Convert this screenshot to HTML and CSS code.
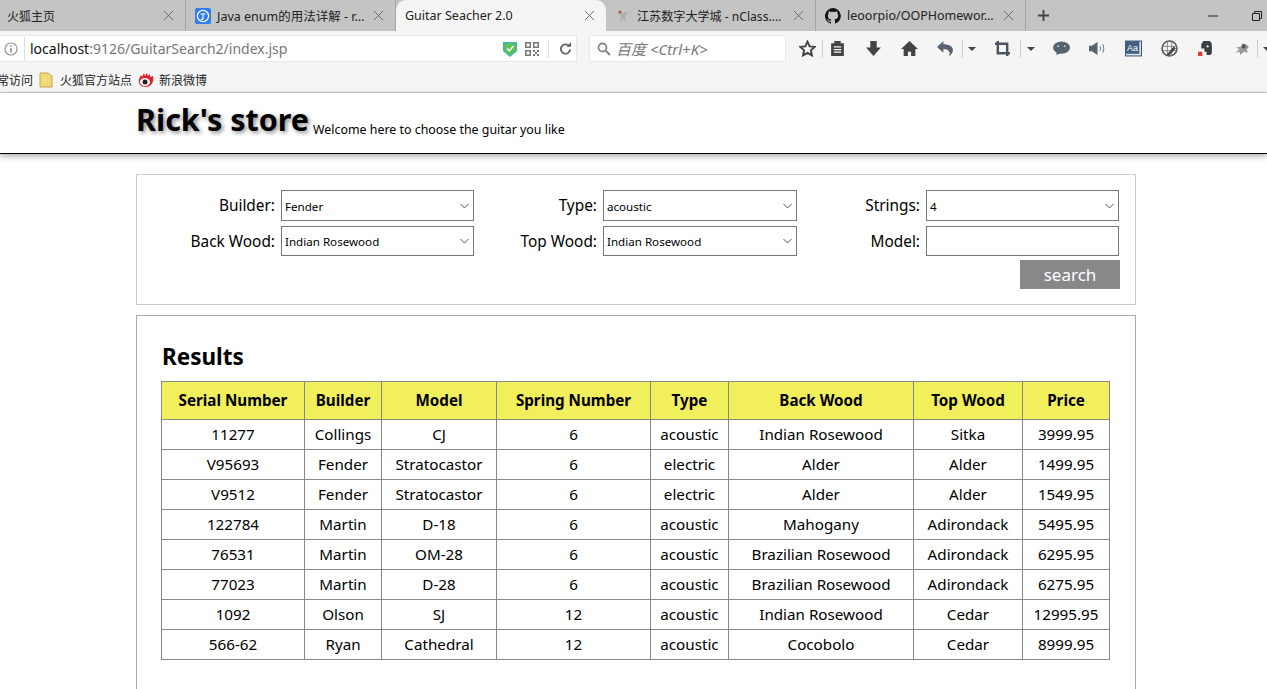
FILE: index.html
```html
<!DOCTYPE html>
<html lang="en">
<head>
	<meta charset="UTF-8">
	<title>Guitar Seacher 2.0</title>
	<link rel="stylesheet" href="styles.css">
</head>
<body>
	<div class="browser">
		<div class="tabs">
			<div class="tab tab-first">
				<span class="tab-title">火狐主页</span>
				<svg class="close" viewBox="0 0 12 12"><path d="M1 1l10 10M11 1L1 11"/></svg>
			</div>
			<div class="tab">
				<svg class="favicon" viewBox="0 0 16 16"><rect width="16" height="16" rx="2" fill="#2f7df0"/><circle cx="8" cy="8" r="5.6" fill="none" stroke="#fff" stroke-width="1.3"/><path d="M5.5 6h5M8 6v4.500c0 1-1 1.200-2 .6" fill="none" stroke="#fff" stroke-width="1.200"/></svg>
				<span class="tab-title">Java enum的用法详解 - r...</span>
				<svg class="close" viewBox="0 0 12 12"><path d="M1 1l10 10M11 1L1 11"/></svg>
			</div>
			<div class="tab tab-active">
				<span class="tab-title">Guitar Seacher 2.0</span>
				<svg class="close" viewBox="0 0 12 12"><path d="M1 1l10 10M11 1L1 11"/></svg>
			</div>
			<div class="tab">
				<svg class="favicon" viewBox="0 0 16 16"><path d="M3 3l5 2 5-2-3 5 1 6-3-3-3 3 1-6z" fill="#b5aca8"/><circle cx="5" cy="4" r="1.500" fill="#a0574d"/></svg>
				<span class="tab-title tab-title-cjk">江苏数字大学城 - nClass....</span>
				<svg class="close" viewBox="0 0 12 12"><path d="M1 1l10 10M11 1L1 11"/></svg>
			</div>
			<div class="tab">
				<svg class="favicon" viewBox="0 0 16 16"><path d="M8 0a8 8 0 0 0-2.500 15.600c.4.100.5-.2.500-.4v-1.400c-2.200.5-2.700-1-2.700-1-.4-.9-.9-1.200-.9-1.200-.7-.5.100-.5.100-.5.800.1 1.200.8 1.200.8.700 1.200 1.900.9 2.300.7.100-.5.300-.9.500-1.100-1.800-.2-3.600-.9-3.600-4 0-.9.300-1.600.8-2.100-.1-.2-.4-1 .1-2.100 0 0 .7-.2 2.200.8a7.600 7.600 0 0 1 4 0c1.500-1 2.200-.8 2.200-.8.400 1.100.2 1.900.1 2.100.5.600.8 1.300.8 2.100 0 3.100-1.900 3.700-3.700 3.900.3.300.6.800.6 1.500v2.200c0 .2.100.5.600.4A8 8 0 0 0 8 0z" fill="#161514"/></svg>
				<span class="tab-title">leoorpio/OOPHomewor...</span>
				<svg class="close" viewBox="0 0 12 12"><path d="M1 1l10 10M11 1L1 11"/></svg>
			</div>
			<svg class="newtab" viewBox="0 0 14 14"><path d="M7 1v12M1 7h12"/></svg>
			<div class="winbtns">
				<svg class="winbtn" viewBox="0 0 10 10"><path d="M0 5h10"/></svg>
				<svg class="winbtn" viewBox="0 0 10 10"><path d="M.5 2.500h7v7h-7zM2.500 2.500v-2h7v7h-2"/></svg>
			</div>
		</div>

		<div class="toolbar">
			<div class="urlbar">
				<svg class="info" viewBox="0 0 14 14"><circle cx="7" cy="7" r="6" fill="none" stroke="#999" stroke-width="1.200"/><path d="M7 6v4.500M7 3.300v1.500" stroke="#888" stroke-width="1.500"/></svg>
				<span class="url"><b>localhost</b>:9126/GuitarSearch2/index.jsp</span>
				<svg class="shield" viewBox="0 0 14 16"><path d="M0 1h14v9l-7 6-7-6z" fill="#3fb5b0"/><path d="M1.500 2.500h11v7L7 14.200 1.500 9.500z" fill="#5cc24d"/><path d="M4 7.500l2.300 2.300L10.500 5" fill="none" stroke="#fff" stroke-width="1.600"/></svg>
				<svg class="qr" viewBox="0 0 14 14"><path d="M0 0h6v6H0zM1.500 1.500v3h3v-3zM8 0h6v6H8zM9.500 1.500v3h3v-3zM0 8h6v6H0zM1.500 9.500v3h3v-3zM8 8h2v2H8zM12 8h2v2h-2zM10 10h2v2h-2zM8 12h2v2H8zM12 12h2v2h-2z" fill="#777" fill-rule="evenodd"/></svg>
				<i class="url-sep"></i>
				<svg class="reload" viewBox="0 0 14 14"><path d="M11 4.500A5 5 0 1 0 12 8" fill="none" stroke="#666" stroke-width="2"/><path d="M8 5h5V0z" fill="#666"/></svg>
			</div>
			<div class="searchbar">
				<svg class="lens" viewBox="0 0 14 14"><circle cx="5.500" cy="5.500" r="4" fill="none" stroke="#888" stroke-width="1.800"/><path d="M8.500 8.500l4.500 4.500" stroke="#888" stroke-width="2.200"/></svg>
				<span class="search-hint">百度 &lt;Ctrl+K&gt;</span>
			</div>
			<div class="tools">
				<svg class="tool tool-star" viewBox="0 0 16 16"><path d="M8 1.500l2 4.500 4.800.5-3.600 3.200 1 4.800L8 12.100l-4.200 2.400 1-4.800L1.200 6.500 6 6z" fill="none" stroke="#444" stroke-width="1.800"/></svg>
				<i class="tool-sep sep-a"></i>
				<svg class="tool tool-clip" viewBox="0 0 16 16"><path d="M2 3h3V1h6v2h3v12H2z" fill="#444"/><path d="M4.500 6.500h7M4.500 9h7M4.500 11.500h7" stroke="#f5f5f5" stroke-width="1.200"/></svg>
				<svg class="tool tool-down" viewBox="0 0 16 16"><path d="M5 1h6v6h4l-7 8-7-8h4z" fill="#444"/></svg>
				<svg class="tool tool-home" viewBox="0 0 16 16"><path d="M8 1L0 8.500h2.500V15h4v-4h3v4h4V8.500H16z" fill="#444"/></svg>
				<svg class="tool tool-undo" viewBox="0 0 16 16"><path d="M6 1L0 6.500 6 12V8.500c3 0 5 1 6 3.500 0 1-.500 2-1 3 3-1 4-3.500 4-5.500 0-3.500-4-5.500-9-5.500z" fill="#5a6470"/></svg>
				<i class="tool-sep sep-b"></i>
				<svg class="tool-caret caret-a" viewBox="0 0 8 4"><path d="M0 0h8L4 4z"/></svg>
				<svg class="tool tool-crop" viewBox="0 0 16 16"><path d="M3 0v13h13M0 3h13v13" fill="none" stroke="#4a5560" stroke-width="2.600"/></svg>
				<i class="tool-sep sep-c"></i>
				<svg class="tool-caret caret-b" viewBox="0 0 8 4"><path d="M0 0h8L4 4z"/></svg>
				<svg class="tool tool-chat" viewBox="0 0 18 16"><ellipse cx="9" cy="7" rx="9" ry="6.500" fill="#566470"/><path d="M4 11l-.5 4L8 13z" fill="#566470"/><circle cx="5.500" cy="5.500" r="1" fill="#ccd"/><circle cx="12.500" cy="5.500" r="1" fill="#ccd"/></svg>
				<svg class="tool tool-sound" viewBox="0 0 18 16"><path d="M0 5h3l6-4v14l-6-4H0z" fill="#566470"/><path d="M11.500 5.500c1 1.500 1 3.500 0 5M14.500 3.500c1.500 3 1.500 6 0 9" fill="none" stroke="#566470"/></svg>
				<svg class="tool tool-dict" viewBox="0 0 16 16"><rect x=".5" y="1" width="15" height="14" fill="#dfe6ee" stroke="#3f5b7c"/><rect x=".5" y="1" width="13" height="12" fill="#41607f"/><text x="7" y="10.500" class="dict-text">Aa</text></svg>
				<svg class="tool tool-globe" viewBox="0 0 16 16"><circle cx="8" cy="8" r="7" fill="none" stroke="#555" stroke-width="1.500"/><path d="M1 6h14M1 10h14M6 1v14M10 1v14" stroke="#777" stroke-width=".8"/><path d="M6 13l6-7 2 2-6 6-3 1z" fill="#444"/></svg>
				<svg class="tool tool-note" viewBox="0 0 16 16"><path d="M6 1h5c2 0 3 2 3 4v6c0 2-1 3-2 3H9v-3H7V8H4V4z" fill="#3a3f44"/><circle cx="10" cy="6" r="1" fill="#f5f5f5"/><rect x="1" y="11" width="4" height="4" fill="#e0392b"/></svg>
				<svg class="tool tool-bug" viewBox="0 0 16 16"><path d="M2 12l4-3-3-2 5-1 1-3 3 1 3 2-2 3 1 3-4-1-3 3-1-3z" fill="#9a9a9a"/><circle cx="10" cy="6" r="2" fill="#555"/></svg>
				<i class="tool-sep sep-d"></i>
				<svg class="tool-caret caret-c" viewBox="0 0 8 4"><path d="M0 0h8L4 4z"/></svg>
			</div>
		</div>

		<div class="bookmarks">
			<span class="bm bm-first">常访问</span>
			<svg class="bm-icon" viewBox="0 0 14 16"><path d="M1 1h8l4 3v11H1z" fill="#f3d878" stroke="#c2a24e"/></svg>
			<span class="bm">火狐官方站点</span>
			<svg class="bm-icon weibo" viewBox="0 0 16 16"><path d="M1 7l2-4 1 2 2-4 1 3 2-3 1 3 2-2v3l3-1c1 4 0 10-7 11C3 15 0 12 1 7z" fill="#e0202a"/><ellipse cx="7" cy="10" rx="5" ry="4" fill="#fff"/><circle cx="7" cy="10" r="2.500" fill="#222"/></svg>
			<span class="bm">新浪微博</span>
		</div>
	</div>

	<header class="site-head">
		<h1>Rick's store</h1>
		<span class="slogan">Welcome here to choose the guitar you like</span>
	</header>

	<form class="panel search-panel">
		<div class="search-grid">
			<label>Builder:</label>
			<select><option>Fender</option></select>
			<label>Type:</label>
			<select><option>acoustic</option></select>
			<label>Strings:</label>
			<select><option>4</option></select>
			<label>Back Wood:</label>
			<select><option>Indian Rosewood</option></select>
			<label>Top Wood:</label>
			<select><option>Indian Rosewood</option></select>
			<label>Model:</label>
			<input type="text">
		</div>
		<div class="search-row">
			<button type="button">search</button>
		</div>
	</form>

	<section class="panel results-panel">
		<h2>Results</h2>
		<table>
			<colgroup>
				<col class="c-serial"><col class="c-builder"><col class="c-model"><col class="c-spring">
				<col class="c-type"><col class="c-back"><col class="c-top"><col class="c-price">
			</colgroup>
			<thead>
				<tr><th>Serial Number</th><th>Builder</th><th>Model</th><th>Spring Number</th><th>Type</th><th>Back Wood</th><th>Top Wood</th><th>Price</th></tr>
			</thead>
			<tbody>
				<tr><td>11277</td><td>Collings</td><td>CJ</td><td>6</td><td>acoustic</td><td>Indian Rosewood</td><td>Sitka</td><td>3999.95</td></tr>
				<tr><td>V95693</td><td>Fender</td><td>Stratocastor</td><td>6</td><td>electric</td><td>Alder</td><td>Alder</td><td>1499.95</td></tr>
				<tr><td>V9512</td><td>Fender</td><td>Stratocastor</td><td>6</td><td>electric</td><td>Alder</td><td>Alder</td><td>1549.95</td></tr>
				<tr><td>122784</td><td>Martin</td><td>D-18</td><td>6</td><td>acoustic</td><td>Mahogany</td><td>Adirondack</td><td>5495.95</td></tr>
				<tr><td>76531</td><td>Martin</td><td>OM-28</td><td>6</td><td>acoustic</td><td>Brazilian Rosewood</td><td>Adirondack</td><td>6295.95</td></tr>
				<tr><td>77023</td><td>Martin</td><td>D-28</td><td>6</td><td>acoustic</td><td>Brazilian Rosewood</td><td>Adirondack</td><td>6275.95</td></tr>
				<tr><td>1092</td><td>Olson</td><td>SJ</td><td>12</td><td>acoustic</td><td>Indian Rosewood</td><td>Cedar</td><td>12995.95</td></tr>
				<tr><td>566-62</td><td>Ryan</td><td>Cathedral</td><td>12</td><td>acoustic</td><td>Cocobolo</td><td>Cedar</td><td>8999.95</td></tr>
			</tbody>
		</table>
	</section>
</body>
</html>
```

FILE: styles.css
```css
html, body {
	height: 689px;
	overflow: hidden;
}

body {
	margin: 0;
	background: #fff;
	color: #000;
	font-family: "Noto Sans", "Noto Sans CJK SC", sans-serif;
}

/* browser frame */
.browser {
	border-bottom: 1px solid #ccc;
}

.tabs {
	height: 31px;
	background: #c4c4c4;
	display: flex;
	align-items: center;
}

.tab {
	width: 210px;
	height: 31px;
	box-sizing: border-box;
	padding: 0 11px 0 9px;
	display: flex;
	align-items: center;
	border-right: 1px solid #a4a4a4;
	font-size: 12.500px;
	color: #222;
	white-space: nowrap;
}

.tab-first {
	width: 186px;
	padding-left: 7px;
	font-size: 12px;
}

.tab-title-cjk {
	font-size: 12.100px;
}

.tab-active {
	background: #f5f5f5;
	border-right: 0;
	border-radius: 10px 10px 0 0;
}

.favicon {
	width: 16px;
	height: 16px;
	margin-right: 6px;
	flex: none;
}

.close {
	width: 11px;
	height: 11px;
	margin-left: auto;
	flex: none;
	fill: none;
	stroke: #666;
	stroke-width: 1;
}

.newtab {
	width: 13px;
	height: 13px;
	margin-left: 11px;
	fill: none;
	stroke: #444;
	stroke-width: 2;
}

.winbtns {
	margin-left: auto;
	display: flex;
	gap: 34px;
	padding-right: 5px;
}

.winbtn {
	width: 10px;
	height: 10px;
	fill: none;
	stroke: #222;
}

.toolbar {
	height: 31px;
	background: #f5f5f5;
	display: flex;
	align-items: flex-start;
	padding-top: 4px;
	box-sizing: border-box;
}

.urlbar {
	width: 577px;
	height: 27px;
	box-sizing: border-box;
	background: #fff;
	border: 1px solid #e8e8e8;
	border-left: 0;
	display: flex;
	align-items: center;
	font-size: 14px;
}

.info {
	width: 14px;
	height: 14px;
	margin: 0 6px 0 4px;
	flex: none;
}

.url {
	color: #777;
	border-left: 1px solid #ddd;
	padding-left: 5px;
	line-height: 24px;
	width: 479px;
	box-sizing: border-box;
	flex: none;
}

.url b {
	font-weight: normal;
	color: #111;
}

.shield {
	width: 14px;
	height: 16px;
	flex: none;
}

.qr {
	width: 14px;
	height: 14px;
	margin-left: 8px;
	flex: none;
}

.url-sep {
	width: 1px;
	height: 18px;
	margin-left: 9px;
	background: #ddd;
	flex: none;
}

.reload {
	width: 13px;
	height: 13px;
	margin-left: 10px;
	flex: none;
}

.searchbar {
	width: 197px;
	height: 27px;
	margin-left: 12px;
	box-sizing: border-box;
	background: #fff;
	border: 1px solid #e8e8e8;
	display: flex;
	align-items: center;
	padding-left: 7px;
	font-size: 15px;
	font-style: italic;
	color: #777;
}

.lens {
	width: 14px;
	height: 14px;
	margin-right: 5px;
}

.tools {
	position: relative;
	flex: 1;
	height: 27px;
}

/* toolbar add-on icons sit at fixed spots along the strip */
.tool {
	position: absolute;
	top: 5px;
	width: 17px;
	height: 17px;
}

.tool-star { left: 13px; }
.tool-clip { left: 43px; }
.tool-down { left: 79px; }
.tool-home { left: 115px; }
.tool-undo { left: 151px; }
.tool-crop { left: 209px; width: 15px; }
.tool-chat { left: 267px; }
.tool-sound { left: 303px; }
.tool-dict { left: 339px; }
.tool-globe { left: 375px; }
.tool-note { left: 411px; }
.tool-bug { left: 447px; }

.dict-text {
	font-family: "Liberation Sans", sans-serif;
	font-size: 8.500px;
	text-anchor: middle;
	fill: #fff;
}

.tool-sep {
	position: absolute;
	top: 5px;
	width: 1px;
	height: 18px;
	background: #ccc;
}

.sep-a { left: 36px; }
.sep-b { left: 176px; }
.sep-c { left: 234px; }
.sep-d { left: 471px; }

.tool-caret {
	position: absolute;
	top: 12px;
	width: 8px;
	height: 4px;
	fill: #444;
}

.caret-a { left: 182px; }
.caret-b { left: 241px; }
.caret-c { left: 477px; }

.bookmarks {
	height: 30px;
	box-sizing: border-box;
	padding-top: 6px;
	background: #f5f5f5;
	display: flex;
	align-items: center;
	font-size: 12px;
	color: #222;
}

.bm-first {
	margin-left: -3px;
	margin-right: 7px;
}

.bm-icon {
	width: 14px;
	height: 16px;
	margin-right: 7px;
	flex: none;
}

.bm {
	margin-right: 6px;
}

.weibo {
	width: 16px;
	margin-right: 5px;
}

/* page */
.site-head {
	height: 61px;
	box-sizing: border-box;
	padding: 7px 0 14px 136px;
	border-bottom: 1px solid #000;
	box-shadow: 0 2px 6px rgba(0, 0, 0, .35);
	display: flex;
	align-items: flex-end;
}

h1 {
	margin: 0 4px 0 0;
	font-size: 30.500px;
	line-height: 40px;
	font-weight: bold;
	text-shadow: 2px 2px 4px rgba(0, 0, 0, .45);
	white-space: nowrap;
}

.slogan {
	font-size: 12.400px;
	line-height: 20px;
	margin-bottom: -1px;
}

.panel {
	width: 1000px;
	margin-left: 136px;
	box-sizing: border-box;
}

.search-panel {
	margin-top: 20px;
	height: 131px;
	border: 1px solid #ccc;
	padding: 15px 15px 0 0;
}

.search-grid {
	display: grid;
	grid-template-columns: 144px 193px 129px 194px 129px 193px;
	grid-template-rows: 31px 30px;
	row-gap: 5px;
}

label {
	text-align: right;
	padding-right: 6px;
	font-size: 15.400px;
	line-height: 32px;
}

select, input {
	margin: 0;
	box-sizing: border-box;
	width: 100%;
	height: 100%;
	border: 1px solid #777;
	border-radius: 0;
	background-color: #fff;
	font-family: "Noto Sans", sans-serif;
	font-size: 11.600px;
	padding: 1px 3px 0;
}

select {
	appearance: none;
	background-image: url("data:image/svg+xml,%3Csvg xmlns='http://www.w3.org/2000/svg' width='9' height='6'%3E%3Cpath d='M.5 1l4 4 4-4' fill='none' stroke='%23555'/%3E%3C/svg%3E");
	background-repeat: no-repeat;
	background-position: right 4px center;
}

.search-row {
	display: flex;
	justify-content: flex-end;
	margin-top: 4px;
}

button {
	width: 100px;
	height: 29px;
	padding: 0;
	border: 0;
	background: #888;
	color: #fff;
	font-family: "Noto Sans", sans-serif;
	font-size: 17px;
}

.results-panel {
	margin-top: 10px;
	height: 400px;
	border: 1px solid #aaa;
	padding: 24px 0 0 24px;
}

h2 {
	margin: 0 0 8px 1px;
	font-size: 22.500px;
	line-height: 33px;
	font-weight: bold;
}

table {
	border-collapse: collapse;
	table-layout: fixed;
	width: 949px;
	font-size: 15.200px;
}

.c-serial { width: 143px; }
.c-builder { width: 77px; }
.c-model { width: 115px; }
.c-spring { width: 154px; }
.c-type { width: 78px; }
.c-back { width: 185px; }
.c-top { width: 109px; }
.c-price { width: 87px; }

th, td {
	border: 1px solid #888;
	padding: 0;
	text-align: center;
	white-space: nowrap;
	vertical-align: top;
}

th {
	height: 37px;
	line-height: 36px;
	background: #f2ef5c;
	font-weight: bold;
}

td {
	height: 29px;
	line-height: 28px;
}
```
